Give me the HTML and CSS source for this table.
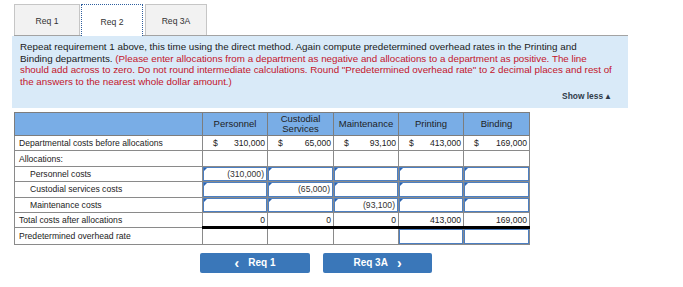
FILE: index.html
```html
<!DOCTYPE html>
<html>
<head>
<meta charset="utf-8">
<link rel="stylesheet" href="styles.css">
</head>
<body>
<div class="tabs">
  <div class="tab">Req 1</div>
  <div class="tab active">Req 2</div>
  <div class="tab">Req 3A</div>
</div>
<div class="prompt">
  <p class="instr">Repeat requirement 1 above, this time using the direct method. Again compute predetermined overhead rates in the Printing and<br>Binding departments. <span class="red">(Please enter allocations from a department as negative and allocations to a department as positive. The line<br>should add across to zero. Do not round intermediate calculations. Round "Predetermined overhead rate" to 2 decimal places and rest of<br>the answers to the nearest whole dollar amount.)</span></p>
  <div class="showless">Show less<span class="tri">▲</span></div>
</div>
<table class="grid">
  <colgroup>
    <col class="c-label"><col class="c-num"><col class="c-num2"><col class="c-num"><col class="c-num"><col class="c-num2">
  </colgroup>
  <thead>
    <tr>
      <th></th>
      <th>Personnel</th>
      <th>Custodial<br>Services</th>
      <th>Maintenance</th>
      <th>Printing</th>
      <th>Binding</th>
    </tr>
  </thead>
  <tbody>
    <tr>
      <td class="label">Departmental costs before allocations</td>
      <td><div class="money"><span>$</span><span>310,000</span></div></td>
      <td><div class="money"><span>$</span><span>65,000</span></div></td>
      <td><div class="money"><span>$</span><span>93,100</span></div></td>
      <td><div class="money"><span>$</span><span>413,000</span></div></td>
      <td><div class="money"><span>$</span><span>169,000</span></div></td>
    </tr>
    <tr>
      <td class="label">Allocations:</td>
      <td></td><td></td><td></td><td></td><td></td>
    </tr>
    <tr>
      <td class="label sub">Personnel costs</td>
      <td class="inp"><div class="box mark">(310,000)</div></td>
      <td class="inp"><div class="box mark"></div></td>
      <td class="inp"><div class="box mark"></div></td>
      <td class="inp"><div class="box mark"></div></td>
      <td class="inp"><div class="box mark"></div></td>
    </tr>
    <tr>
      <td class="label sub">Custodial services costs</td>
      <td class="inp"><div class="box mark"></div></td>
      <td class="inp"><div class="box mark">(65,000)</div></td>
      <td class="inp"><div class="box mark"></div></td>
      <td class="inp"><div class="box mark"></div></td>
      <td class="inp"><div class="box mark"></div></td>
    </tr>
    <tr>
      <td class="label sub">Maintenance costs</td>
      <td class="inp"><div class="box mark"></div></td>
      <td class="inp"><div class="box mark"></div></td>
      <td class="inp"><div class="box mark">(93,100)</div></td>
      <td class="inp"><div class="box mark"></div></td>
      <td class="inp"><div class="box mark"></div></td>
    </tr>
    <tr class="total">
      <td class="label">Total costs after allocations</td>
      <td class="num">0</td>
      <td class="num">0</td>
      <td class="num">0</td>
      <td class="num">413,000</td>
      <td class="num">169,000</td>
    </tr>
    <tr>
      <td class="label">Predetermined overhead rate</td>
      <td></td><td></td><td></td>
      <td class="inp"><div class="box"></div></td>
      <td class="inp"><div class="box"></div></td>
    </tr>
  </tbody>
</table>
<div class="nav">
  <button class="btn"><span class="chev">&lsaquo;</span>Req 1</button>
  <button class="btn">Req 3A<span class="chev r">&rsaquo;</span></button>
</div>
</body>
</html>
```

FILE: styles.css
```css
html, body {
  margin: 0;
  padding: 0;
  background: #ffffff;
}
body {
  font-family: "Liberation Sans", Arial, sans-serif;
  color: #222;
  width: 683px;
  height: 287px;
  overflow: hidden;
}
.tabs {
  display: flex;
  gap: 1px;
  margin-left: 14px;
  padding-top: 4px;
  width: 614px;
  border-bottom: 1px solid #a3a3a3;
}
.tab {
  width: 62px;
  height: 31px;
  box-sizing: border-box;
  border: 1px solid #c6c6c6;
  border-bottom: none;
  background: #f2f2f2;
  display: flex;
  align-items: center;
  justify-content: center;
  padding-top: 2px;
  font-size: 8.6px;
  color: #333;
}
.tab:first-child {
  width: 66px;
}
.tab.active {
  background: #fff;
  border: 1px dotted #2f5f9e;
  border-bottom: none;
  height: 32px;
  margin-bottom: -1px;
}
.tab:last-child {
  margin-left: 1px;
}
.prompt {
  margin-left: 12px;
  width: 616px;
  background: #d9eaf8;
  padding: 5px 16px 6px 8px;
  box-sizing: border-box;
}
.instr {
  margin: 0;
  font-size: 9.8px;
  line-height: 11.5px;
  white-space: nowrap;
  color: #1a1a1a;
}
.red {
  color: #c3152b;
}
.showless {
  margin-top: 4px;
  text-align: right;
  font-size: 8.4px;
  line-height: 11px;
  font-weight: bold;
  color: #2f3b48;
}
.tri {
  font-size: 8px;
  margin-left: 1px;
}
.grid {
  margin: 4px 0 0 14px;
  border-collapse: collapse;
  table-layout: fixed;
  width: 516px;
  font-size: 8.6px;
  color: #222;
  border: 1.5px solid #7d7d7d;
}
.c-label { width: 188px; }
.c-num { width: 65px; }
.c-num2 { width: 66px; }
.grid th {
  background: #79ade6;
  font-weight: normal;
  height: 22px;
  padding: 0;
  border: 1px solid #7d7d7d;
  font-size: 9.5px;
  line-height: 10px;
  color: #1e1e1e;
  vertical-align: middle;
}
.grid td {
  height: 15.4px;
  padding: 0 2px;
  border: 1px solid #8a8a8a;
  box-sizing: border-box;
  white-space: nowrap;
  line-height: 12px;
}
.grid td.label {
  padding-left: 4px;
}
.grid td.sub {
  padding-left: 15px;
}
.money {
  display: flex;
  justify-content: space-between;
  padding-left: 8px;
}
.grid td.num {
  text-align: right;
}
.grid td.inp {
  padding: 0;
}
.box {
  position: relative;
  box-sizing: border-box;
  height: 14.4px;
  border: 1px solid #4c7fc2;
  text-align: right;
  padding-right: 2px;
  line-height: 12px;
  color: #333;
}
.box.mark::before {
  content: "";
  position: absolute;
  left: 0;
  top: 0;
  border-top: 3px solid #2b63b0;
  border-right: 3px solid transparent;
}
.total td.num {
  border-top: 1px solid #000;
  border-bottom: 3px solid #000;
}
.total td.label {
  border-bottom: 1px solid #8a8a8a;
}
.nav {
  display: flex;
  gap: 13px;
  margin: 8px 0 0 200px;
}
.btn {
  width: 110px;
  height: 20px;
  border: none;
  border-radius: 2px;
  background: #3a77b9;
  color: #fff;
  font-family: "Liberation Sans", Arial, sans-serif;
  font-weight: bold;
  font-size: 10px;
  display: flex;
  align-items: center;
  justify-content: center;
  padding: 0;
}
.btn + .btn {
  width: 109px;
}
.chev {
  font-size: 14px;
  margin-right: 9px;
  line-height: 10px;
}
.chev.r {
  margin-left: 9px;
  margin-right: 0;
}
```
